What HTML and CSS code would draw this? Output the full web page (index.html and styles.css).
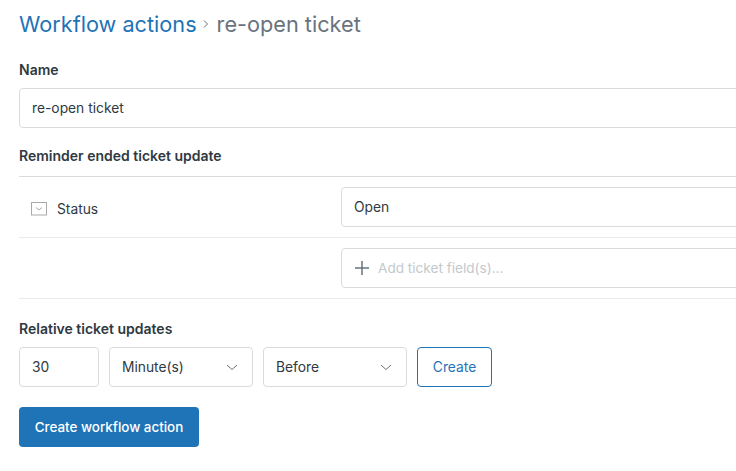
FILE: index.html
```html
<!DOCTYPE html>
<html lang="en">
<head>
<meta charset="utf-8">
<title>re-open ticket</title>
<link rel="stylesheet" href="styles.css">
</head>
<body>
<main class="page">
  <h1 class="title"><a class="crumb" href="#">Workflow actions</a><svg class="sep" width="8" height="10" viewBox="0 0 8 10"><path d="M2 1.500 5.500 5 2 8.500" fill="none" stroke="#68737d" stroke-width="1"/></svg><span>re-open ticket</span></h1>
  <label class="label name-label">Name</label>
  <div class="field">re-open ticket</div>
  <div class="label section-label">Reminder ended ticket update</div>
  <div class="row first-row">
    <div class="row-name">
      <svg class="type-icon" width="16" height="14" viewBox="0 0 16 14"><rect x=".5" y=".5" width="15" height="12.500" fill="#fff" stroke="#a9a9a9"/><path d="M5 5.500 8 8l3-2.500" fill="none" stroke="#a9a9a9"/></svg>
      <span>Status</span>
    </div>
    <div class="field row-field">Open</div>
  </div>
  <div class="row second-row">
    <div class="row-name"></div>
    <div class="field row-field add-field">
      <svg class="plus" width="14" height="14" viewBox="0 0 14 14"><path d="M7 0v14M0 7h14" fill="none" stroke="#68737d" stroke-width="1.500"/></svg>
      <span class="placeholder">Add ticket field(s)...</span>
    </div>
  </div>
  <div class="label relative-label">Relative ticket updates</div>
  <div class="controls">
    <div class="field number">30</div>
    <div class="field select"><span>Minute(s)</span><svg width="12" height="7" viewBox="0 0 12 7"><path d="M1 1l5 4.500L11 1" fill="none" stroke="#68737d"/></svg></div>
    <div class="field select"><span>Before</span><svg width="12" height="7" viewBox="0 0 12 7"><path d="M1 1l5 4.500L11 1" fill="none" stroke="#68737d"/></svg></div>
    <button class="btn btn-outline" type="button">Create</button>
  </div>
  <button class="btn btn-primary" type="button">Create workflow action</button>
</main>
</body>
</html>
```
FILE: styles.css
```css
* { box-sizing: border-box; }
html, body { margin: 0; height: 100%; overflow: hidden; background: #fff; }
body { font-family: Inter, "Noto Sans", sans-serif; font-size: 13.800px; color: #2f3941; }
.page { width: 790px; padding: 9px 0 0 19px; }
.title { margin: 0; display: flex; align-items: center; height: 30px; font-size: 21.700px; font-weight: 400; line-height: 30px; color: #68737d; }
.crumb { color: #1f73b7; text-decoration: none; }
.sep { margin: 0 7px 0 5px; }
.label { font-size: 14px; font-weight: 600; line-height: 20px; color: #2f3941; }
.name-label { display: block; margin-top: 21px; }
.field { height: 40px; display: flex; align-items: center; padding: 0 12px; border: 1px solid #d8dcde; border-radius: 4px; background: #fff; line-height: 20px; }
.name-label + .field { margin-top: 8px; }
.section-label { margin-top: 18px; padding-bottom: 10px; border-bottom: 1px solid #d8dcde; }
.row { display: flex; align-items: center; border-bottom: 1px solid #e9ebed; }
.first-row { height: 61px; }
.second-row { height: 61px; }
.row-name { width: 322px; flex: none; display: flex; align-items: center; gap: 10px; padding: 4px 0 0 12px; }
.type-icon { flex: none; }
.row-field { flex: 1; }
.add-field { gap: 9px; padding-left: 13px; }
.placeholder { color: #c2c8cc; font-size: 13.600px; }
.relative-label { margin-top: 20px; }
.controls { display: flex; gap: 10px; margin-top: 8px; }
.number { width: 80px; }
.select { width: 144px; justify-content: space-between; padding-right: 14px; }
.btn { height: 40px; border-radius: 4px; font: inherit; cursor: pointer; }
.btn-outline { width: 75px; padding: 0; border: 1px solid #1f73b7; background: #fff; color: #1f73b7; }
.btn-primary { display: block; width: 180px; margin-top: 20px; padding: 0; border: 0; background: #1f73b7; color: #fff; font-size: 13.400px; font-weight: 500; }
```
